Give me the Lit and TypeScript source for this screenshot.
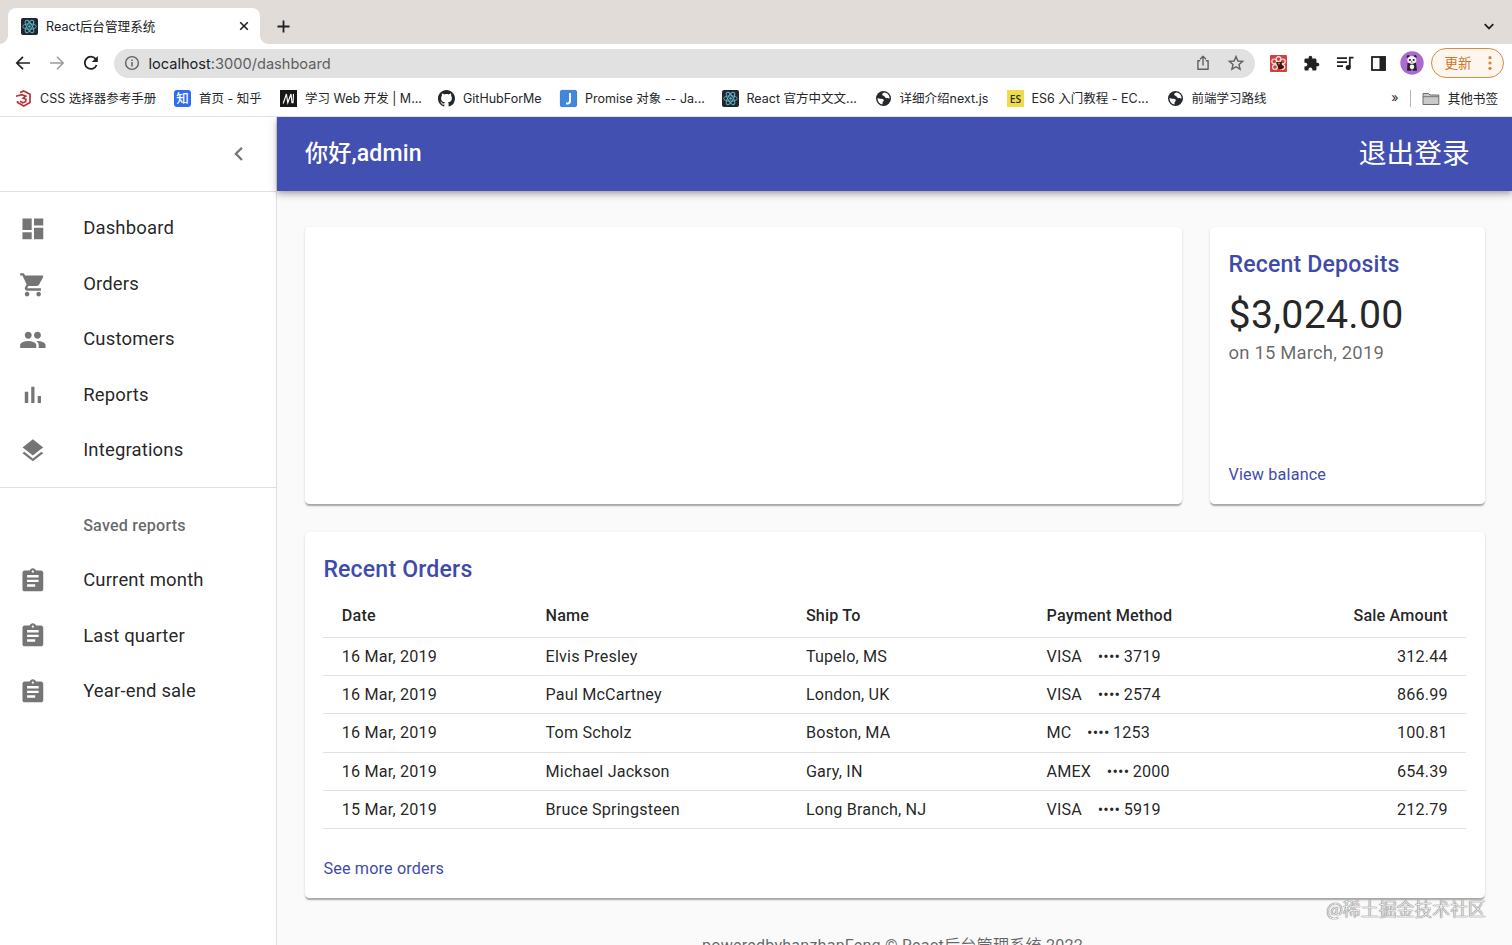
import { LitElement, html, css, svg } from "lit";
import { customElement, property } from "lit/decorators.js";
import { styleMap } from "lit/directives/style-map.js";

const reactMark = svg`<rect width="17" height="17" rx="2" fill="#20262e"/><g fill="none" stroke="#5fb4c9" stroke-width=".95"><ellipse cx="8.5" cy="8.5" rx="6.9" ry="2.7"/><ellipse cx="8.5" cy="8.5" rx="6.9" ry="2.7" transform="rotate(60 8.5 8.5)"/><ellipse cx="8.5" cy="8.5" rx="6.9" ry="2.7" transform="rotate(120 8.5 8.5)"/></g><circle cx="8.5" cy="8.5" r="1.3" fill="#5fb4c9"/>`;
const globe = svg`<circle cx="8.5" cy="8.5" r="7.5" fill="#25282c"/><path d="M2.5 8C4.5 9.2 5.8 8.4 7.6 9 9.2 9.600 9.200 11.200 7.700 11.800L7.400 14.500C4.200 13.800 2.400 11.200 2.500 8ZM9.600 2.500C8.400 3 6.800 3.400 7.200 4.800 7.800 6 9.400 5.700 9.900 7 10.400 8.600 12.700 8 14.600 8.600 14.800 5.600 12.600 3 9.600 2.500Z" fill="#fff"/>`;

const small: Record<string, unknown> = {
  react: reactMark,
  globe,
  css: svg`<path d="M5 2.6 8.7 1 15 4.3V12.6L8.7 16 2.6 12.6V11" fill="none" stroke="#b5343c" stroke-width="1.7"/><path d="M1 6.2 7 4.6 10.8 6.2 8.2 8.2 11 9.2 10.6 11.7 7.8 12.7 5 11.2" fill="none" stroke="#b5343c" stroke-width="1.7"/>`,
  zhihu: svg`<rect width="17" height="17" rx="3" fill="#2f6df0"/><text x="8.5" y="13" text-anchor="middle" font-family="Noto Sans CJK SC, sans-serif" font-weight="500" font-size="12.5" fill="#fff">知</text>`,
  mdn: svg`<rect width="17" height="17" fill="#15171a"/><path d="M3.2 13.5 6.4 4 7.8 12.800 11 4 12 13.300M13.500 4 13 13.300" fill="none" stroke="#fff" stroke-width="1.15"/>`,
  github: svg`<path transform="scale(1.06)" fill="#22262b" d="M8 0C3.58 0 0 3.58 0 8c0 3.54 2.29 6.53 5.47 7.59.4.07.55-.17.55-.38 0-.19-.01-.82-.01-1.49-2.01.37-2.53-.49-2.69-.94-.09-.23-.48-.94-.82-1.13-.28-.15-.68-.52-.01-.53.63-.01 1.08.58 1.23.82.72 1.21 1.87.87 2.33.66.07-.52.28-.87.51-1.07-1.78-.2-3.64-.89-3.64-3.95 0-.87.31-1.59.82-2.15-.08-.2-.36-1.02.08-2.12 0 0 .67-.21 2.2.82.64-.18 1.32-.27 2-.27s1.36.09 2 .27c1.53-1.04 2.2-.82 2.2-.82.44 1.1.16 1.92.08 2.12.51.56.82 1.27.82 2.15 0 3.07-1.87 3.75-3.65 3.95.29.25.54.73.54 1.48 0 1.07-.01 1.93-.01 2.2 0 .21.15.46.55.38A8.01 8.01 0 0 0 16 8c0-4.42-3.58-8-8-8Z"/>`,
  jia: svg`<rect x=".4" y=".4" width="16.2" height="16.2" rx="1.5" fill="#3f87e0" stroke="#2f6cbd" stroke-width=".8"/><path d="M10 3V10.8Q10 13.6 7.4 13.6H6" fill="none" stroke="#fff" stroke-width="2"/>`,
  es: svg`<rect width="17" height="17" fill="#efdb4f"/><text x="8.5" y="12.6" text-anchor="middle" font-family="Open Sans, sans-serif" font-weight="600" font-size="10.5" textLength="11.4" lengthAdjust="spacingAndGlyphs" fill="#33301c">ES</text>`,
};

const mui: Record<string, string> = {
  dashboard: "M3 13h8V3H3v10zm0 8h8v-6H3v6zm10 0h8V11h-8v10zm0-18v6h8V3h-8z",
  cart: "M7 18c-1.1 0-1.99.9-1.99 2S5.9 22 7 22s2-.9 2-2-.9-2-2-2zM1 2v2h2l3.6 7.59-1.35 2.45c-.16.28-.25.61-.25.96 0 1.1.9 2 2 2h12v-2H7.42c-.14 0-.25-.11-.25-.25l.03-.12.9-1.63h7.45c.75 0 1.41-.41 1.75-1.03l3.58-6.49c.08-.14.12-.31.12-.48 0-.55-.45-1-1-1H5.21l-.94-2H1zm16 16c-1.1 0-1.99.9-1.99 2s.89 2 1.99 2 2-.9 2-2-.9-2-2-2z",
  people: "M16 11c1.66 0 2.99-1.34 2.99-3S17.66 5 16 5c-1.66 0-3 1.34-3 3s1.34 3 3 3zm-8 0c1.66 0 2.99-1.34 2.99-3S9.66 5 8 5C6.34 5 5 6.34 5 8s1.34 3 3 3zm0 2c-2.33 0-7 1.17-7 3.5V19h14v-2.5c0-2.33-4.67-3.5-7-3.5zm8 0c-.29 0-.62.02-.97.05 1.16.84 1.97 1.97 1.97 3.45V19h6v-2.5c0-2.33-4.67-3.5-7-3.5z",
  bars: "M5 9.2h3V19H5zM10.6 5h2.8v14h-2.8zm5.6 8H19v6h-2.8z",
  layers: "M11.99 18.54l-7.37-5.73L3 14.07l9 7 9-7-1.63-1.27-7.38 5.74zM12 16l7.36-5.73L21 9l-9-7-9 7 1.63 1.27L12 16z",
  assignment: "M19 3h-4.18C14.4 1.84 13.3 1 12 1c-1.3 0-2.4.84-2.82 2H5c-1.1 0-2 .9-2 2v14c0 1.1.9 2 2 2h14c1.1 0 2-.9 2-2V5c0-1.1-.9-2-2-2zm-7 0c.55 0 1 .45 1 1s-.45 1-1 1-1-.45-1-1 .45-1 1-1zm2 14H7v-2h7v2zm3-4H7v-2h10v2zm0-4H7V7h10v2z",
  chevron: "M15.41 7.41L14 6l-6 6 6 6 1.41-1.41L10.83 12z",
};

@customElement("app-bookmark")
class AppBookmark extends LitElement {
  @property() icon = "";
  @property({ type: Number }) text = 100;
  static styles = css`
    :host { display: flex; align-items: center; height: 18px; flex: none; }
    svg { width: 17px; height: 17px; display: block; flex: none; overflow: visible; }
    .label { margin-left: 8px; font: 12.5px/18px Inter, "Noto Sans CJK SC", sans-serif; color: #25272a; height: 18px; white-space: nowrap; display: block; flex: none; }
  `;
  render() {
    return html`<svg viewBox="0 0 17 17">${small[this.icon]}</svg>
      <span class="label" style=${styleMap({ width: `${this.text}px` })}><slot></slot></span>`;
  }
}

@customElement("browser-bar")
class BrowserBar extends LitElement {
  static styles = css`
    :host { display: block; height: 116.500px; background: #fff; font-family: Inter, "Noto Sans CJK SC", sans-serif; color: #202124; box-sizing: border-box; border-bottom: 1px solid #dfe0e1; }
    svg { display: block; flex: none; }
    .tabs { height: 44px; background: #e1dcd8; display: flex; align-items: flex-end; }
    .foot { width: 8px; height: 8px; flex: none; background: radial-gradient(circle at 0 0, transparent 7.5px, #fff 8px); }
    .foot.right { background: radial-gradient(circle at 100% 0, transparent 7.5px, #fff 8px); }
    .tab { width: 252px; height: 36px; box-sizing: border-box; background: #fff; border-radius: 8px 8px 0 0; display: flex; align-items: center; padding: 0 11.500px 0 13px; }
    .title { flex: 1; margin-left: 8px; font-size: 12.600px; line-height: 18px; white-space: nowrap; padding-top: 1px; }
    .plus { margin: 0 0 11px 9px; }
    .down { margin: 0 17px 11px auto; }
    .tools { height: 38px; display: flex; align-items: center; padding-left: 14px; }
    .nav { margin-right: 16px; }
    .url { width: 1141px; height: 29px; box-sizing: border-box; border-radius: 15px; background: #e1e1e1; display: flex; align-items: center; padding: 0 10px 0 10.500px; margin-left: -2.500px; }
    .addr { flex: 1; margin-left: 8.500px; font-size: 14.600px; line-height: 20px; color: #5d5f62; padding-top: 1px; }
    .addr b { font-weight: 400; color: #202124; }
    .star { margin-left: 16px; }
    .ext { display: flex; align-items: center; margin-left: 15.500px; gap: 16px; }
    .avatar { margin-left: -3px; }
    .update { margin-left: 7px; width: 73px; height: 30px; box-sizing: border-box; border: 1.5px solid #dc8a42; border-radius: 15px; background: #fdf6ee; color: #d07325; display: flex; align-items: center; padding: 0 11px 0 12.500px; justify-content: space-between; font-size: 13.5px; line-height: 18px; }
    .marks { height: 33px; display: flex; align-items: center; padding: 0 14px 0 15px; }
    .list { display: flex; flex: 1; gap: 17px; }
    .more { font-size: 12.500px; line-height: 18px; margin: 0 11px 1px 0; }
    .sep { width: 1px; height: 17px; background: #b3b3b3; margin-right: 11px; }
    .other { font-size: 12.600px; line-height: 18px; margin-left: 8px; }
  `;
  render() {
    return html`
      <div class="tabs">
        <div class="foot"></div>
        <div class="tab">
          <svg width="17" height="17" viewBox="0 0 17 17">${reactMark}</svg>
          <span class="title">React后台管理系统</span>
          <svg width="10" height="10" viewBox="0 0 10 10"><path d="M1.2 1.2 8.8 8.8M8.8 1.2 1.2 8.8" stroke="#202124" stroke-width="1.6"/></svg>
        </div>
        <div class="foot right"></div>
        <svg class="plus" width="13" height="13" viewBox="0 0 13 13"><path d="M6.5 .5V12.5M.5 6.5H12.5" stroke="#202124" stroke-width="1.8"/></svg>
        <svg class="down" width="12" height="13" viewBox="0 0 12 13"><path d="M1.7 4.2 6 8.5 10.3 4.2" fill="none" stroke="#202124" stroke-width="1.8"/></svg>
      </div>
      <div class="tools">
        <svg class="nav" width="18" height="18" viewBox="0 0 18 18"><path d="M16 9H3M9 2.8 2.8 9 9 15.2" fill="none" stroke="#202124" stroke-width="1.7"/></svg>
        <svg class="nav" width="18" height="18" viewBox="0 0 18 18"><path d="M2 9H15M9 2.8 15.2 9 9 15.2" fill="none" stroke="#9a9c9e" stroke-width="1.5"/></svg>
        <svg class="nav" width="18" height="18" viewBox="0 0 18 18"><path d="M14.6 11A6.1 6.1 0 1 1 13.6 4.9L15 6.4" fill="none" stroke="#202124" stroke-width="1.8"/><path d="M15.8 2V8H9.8Z" fill="#202124"/></svg>
        <div class="url">
          <svg width="16" height="16" viewBox="0 0 16 16"><circle cx="8" cy="8" r="6.4" fill="none" stroke="#5f6163" stroke-width="1.4"/><path d="M8 7V11.6M8 4.4V5.9" stroke="#5f6163" stroke-width="1.5"/></svg>
          <span class="addr"><b>localhost</b>:3000/dashboard</span>
          <svg width="16" height="18" viewBox="0 0 16 18"><path d="M5.2 6.8H2.9V15.2H13.1V6.8H10.8M8 11.5V2.4M5 5.2 8 2.2 11 5.2" fill="none" stroke="#5f6163" stroke-width="1.4" stroke-linejoin="round"/></svg>
          <svg class="star" width="18" height="18" viewBox="0 0 18 18"><path d="M9 2.5 10.9 7 15.7 7.4 12 10.5 13.1 15.2 9 12.7 4.9 15.2 6 10.5 2.3 7.4 7.1 7Z" fill="none" stroke="#5f6163" stroke-width="1.4"/></svg>
        </div>
        <div class="ext">
          <svg width="17" height="17" viewBox="0 0 17 17"><rect width="17" height="17" rx="1" fill="#cf4240"/><g fill="none" stroke="#fae4df" stroke-width="1.2"><circle cx="8.5" cy="4.1" r="2.4"/><circle cx="4.2" cy="6.4" r="2.4"/><circle cx="12.8" cy="6.4" r="2.4"/><circle cx="5" cy="12" r="2.4"/><circle cx="12.4" cy="12" r="2.4"/></g><path d="M6 7 9 7.3 12 6.5 11.8 9.5 14 12 11.6 14.2 8.5 14 7.5 10.5Z" fill="#3c1615"/><circle cx="9" cy="8.6" r=".9" fill="#d99c39"/></svg>
          <svg width="17" height="17" viewBox="0 0 24 24"><path fill="#202124" d="M20.5 11H19V7c0-1.1-.9-2-2-2h-4V3.5C13 2.12 11.88 1 10.5 1S8 2.12 8 3.5V5H4c-1.1 0-1.99.9-1.99 2v3.8H3.5c1.49 0 2.7 1.21 2.7 2.7s-1.21 2.7-2.7 2.7H2V20c0 1.1.9 2 2 2h3.800v-1.500c0-1.490 1.210-2.700 2.700-2.700 1.490 0 2.700 1.210 2.700 2.700V22H17c1.100 0 2-.9 2-2v-4h1.500c1.380 0 2.500-1.120 2.500-2.500S21.880 11 20.500 11z"/></svg>
          <svg width="18" height="17" viewBox="0 0 18 17"><path d="M1 3.1H11M1 7.1H11M1 11.1H7M13.8 12V2.7H17.5" fill="none" stroke="#202124" stroke-width="1.8"/><circle cx="12.2" cy="12.4" r="2.5" fill="#202124"/></svg>
          <svg width="17" height="17" viewBox="0 0 17 17"><rect x="2" y="2" width="13" height="13" fill="none" stroke="#202124" stroke-width="1.8"/><rect x="9.5" y="1.5" width="6" height="14" fill="#202124"/></svg>
          <svg class="avatar" width="24" height="24" viewBox="0 0 24 24"><circle cx="12" cy="12" r="11.7" fill="#aa6bd0"/><g fill="#28222f"><circle cx="8.3" cy="5.8" r="1.7"/><circle cx="15" cy="5.8" r="1.7"/><path d="M7.5 12h8.5l1 7.8h-4l-1-2-1 2H7Z"/></g><ellipse cx="11.8" cy="9" rx="4.6" ry="3.9" fill="#f4f0f3"/><ellipse cx="12" cy="15.8" rx="2.3" ry="2.4" fill="#f4f0f3"/><g fill="#28222f"><circle cx="9.9" cy="9" r="1.1"/><circle cx="13.7" cy="9" r="1.1"/><circle cx="11.8" cy="10.9" r=".6"/></g></svg>
        </div>
        <div class="update"><span>更新</span><svg width="4" height="16" viewBox="0 0 4 16"><g fill="#d98137"><circle cx="2" cy="2.7" r="1.6"/><circle cx="2" cy="8" r="1.6"/><circle cx="2" cy="13.3" r="1.6"/></g></svg></div>
      </div>
      <div class="marks">
        <div class="list">
          <app-bookmark icon="css" text="117">CSS 选择器参考手册</app-bookmark>
          <app-bookmark icon="zhihu" text="64">首页 - 知乎</app-bookmark>
          <app-bookmark icon="mdn" text="116">学习 Web 开发 | M...</app-bookmark>
          <app-bookmark icon="github" text="80">GitHubForMe</app-bookmark>
          <app-bookmark icon="jia" text="119.5">Promise 对象 -- Ja...</app-bookmark>
          <app-bookmark icon="react" text="111">React 官方中文文...</app-bookmark>
          <app-bookmark icon="globe" text="90">详细介绍next.js</app-bookmark>
          <app-bookmark icon="es" text="118">ES6 入门教程 - EC...</app-bookmark>
          <app-bookmark icon="globe" text="76">前端学习路线</app-bookmark>
        </div>
        <span class="more">»</span>
        <div class="sep"></div>
        <svg width="18" height="14" viewBox="0 0 18 14"><path d="M1 12.5V1.5H6.5L8 3H16.8V12.5Z" fill="#c9c9c9" stroke="#6d6d6d" stroke-width="1"/><path d="M1 4.7H16.8" stroke="#6d6d6d" stroke-width=".9"/></svg>
        <span class="other">其他书签</span>
      </div>`;
  }
}

const orders = [
  ["16 Mar, 2019", "Elvis Presley", "Tupelo, MS", "VISA ⠀•••• 3719", "312.44"],
  ["16 Mar, 2019", "Paul McCartney", "London, UK", "VISA ⠀•••• 2574", "866.99"],
  ["16 Mar, 2019", "Tom Scholz", "Boston, MA", "MC ⠀•••• 1253", "100.81"],
  ["16 Mar, 2019", "Michael Jackson", "Gary, IN", "AMEX ⠀•••• 2000", "654.39"],
  ["15 Mar, 2019", "Bruce Springsteen", "Long Branch, NJ", "VISA ⠀•••• 5919", "212.79"],
];

@customElement("app-root")
class AppRoot extends LitElement {
  static styles = css`
    :host { display: block; height: 945px; overflow: hidden; position: relative; }
    * { box-sizing: border-box; }
    .page { zoom: 1.155; height: 718px; display: flex; background: #fafafa; overflow: hidden; font-family: Roboto, "Noto Sans CJK SC", sans-serif; color: rgba(0,0,0,.87); }
    .drawer { width: 240px; flex: none; background: #fff; border-right: 1px solid rgba(0,0,0,.12); }
    .head { height: 64.5px; display: flex; align-items: center; justify-content: flex-end; padding-right: 20.5px; }
    svg { width: 24px; height: 24px; fill: rgba(0,0,0,.54); display: block; flex: none; }
    .group { border-top: 1px solid rgba(0,0,0,.12); padding: 8px 0; }
    .group + .group { margin-top: -.3px; }
    .item { height: 48px; display: flex; align-items: center; padding-left: 16.4px; gap: 31.6px; font-size: 16px; line-height: 24px; letter-spacing: .00938em; }
    .item span { padding-top: .6px; }
    .sub { height: 48px; line-height: 49px; padding-left: 72px; font-size: 14px; font-weight: 500; letter-spacing: .01071em; color: rgba(0,0,0,.6); }
    .main { flex: 1; min-width: 0; display: flex; flex-direction: column; }
    .bar { height: 64.2px; flex: none; background: #4250b1; color: #fff; display: flex; align-items: center; justify-content: space-between; padding: 0 36.6px 0 24px; box-shadow: 0 2px 4px -1px rgba(0,0,0,.2), 0 4px 5px rgba(0,0,0,.14), 0 1px 10px rgba(0,0,0,.12); position: relative; }
    .hello { font-size: 20px; font-weight: 500; line-height: 32px; letter-spacing: .0075em; padding-top: 2.400px; }
    .logout { font-size: 24px; line-height: 24px; padding-top: 1px; }
    .content { padding: 31.6px 23.6px 0 24px; display: grid; grid-template-columns: 1fr 237.8px; gap: 24px; }
    .card { background: #fff; border-radius: 4px; padding: 16px; display: flex; flex-direction: column; box-shadow: 0 2px 1px -1px rgba(0,0,0,.16), 0 1px 1px rgba(0,0,0,.12), 0 1px 3px rgba(0,0,0,.1); }
    .chart, .deposit { height: 240px; }
    .orders { grid-column: 1 / 3; }
    .h6 { font-size: 20px; font-weight: 500; line-height: 32px; letter-spacing: .0075em; color: #3f4bab; padding-top: 1.300px; margin-bottom: 5.700px; }
    .sum { font-size: 34px; line-height: 42px; letter-spacing: .00735em; padding-top: .5px; }
    .date { flex: 1; font-size: 16px; line-height: 24px; letter-spacing: .00938em; color: rgba(0,0,0,.6); }
    .link { font-size: 14px; line-height: 20px; letter-spacing: .01071em; color: #3f4bab; }
    .more { margin-top: 24px; padding-top: .6px; margin-bottom: -.6px; }
    table { width: 100%; table-layout: fixed; border-collapse: separate; border-spacing: 0; }
    th, td { text-align: left; font-size: 14px; line-height: 20px; letter-spacing: .01071em; padding: 6px 16px; border-bottom: 1px solid #e0e0e0; font-weight: 400; white-space: pre; }
    td { padding: 6.100px 16px; }
    td.c3 { word-spacing: -.6px; }
    th { font-weight: 500; line-height: 24px; }
    .c0 { width: 176.4px; } .c1 { width: 225.4px; } .c2 { width: 208.3px; }
    .c4 { text-align: right; width: 150px; }
    .foot { text-align: center; font-size: 14px; line-height: 20px; letter-spacing: .01071em; color: rgba(0,0,0,.6); margin-top: 31.4px; padding-right: 3.5px; white-space: nowrap; }
    .mark { position: absolute; right: 26px; top: 896px; font: 300 17.9px/24px "Noto Sans CJK SC", sans-serif; color: #f6f6f6; text-shadow: 0 0 1px #666, 0 0 1px #777, 0 0 1px #888; }
  `;
  item(icon: string, label: string) {
    return html`<div class="item"><svg viewBox="0 0 24 24"><path d=${mui[icon]}></path></svg><span>${label}</span></div>`;
  }
  render() {
    return html`
      <browser-bar></browser-bar>
      <div class="page">
        <div class="drawer">
          <div class="head"><svg viewBox="0 0 24 24"><path d=${mui.chevron}></path></svg></div>
          <div class="group">
            ${this.item("dashboard", "Dashboard")}${this.item("cart", "Orders")}${this.item("people", "Customers")}${this.item("bars", "Reports")}${this.item("layers", "Integrations")}
          </div>
          <div class="group">
            <div class="sub">Saved reports</div>
            ${this.item("assignment", "Current month")}${this.item("assignment", "Last quarter")}${this.item("assignment", "Year-end sale")}
          </div>
        </div>
        <div class="main">
          <div class="bar"><span class="hello">你好,admin</span><span class="logout">退出登录</span></div>
          <div class="content">
            <div class="card chart"></div>
            <div class="card deposit">
              <div class="h6">Recent Deposits</div>
              <div class="sum">$3,024.00</div>
              <div class="date">on 15 March, 2019</div>
              <div class="link">View balance</div>
            </div>
            <div class="card orders">
              <div class="h6">Recent Orders</div>
              <table>
                <thead><tr>${["Date", "Name", "Ship To", "Payment Method", "Sale Amount"].map((t, i) => html`<th class="c${i}">${t}</th>`)}</tr></thead>
                <tbody>${orders.map((r) => html`<tr>${r.map((t, i) => html`<td class="c${i}">${t}</td>`)}</tr>`)}</tbody>
              </table>
              <div class="link more">See more orders</div>
            </div>
          </div>
          <div class="foot">poweredbyhanzhanFeng © React后台管理系统 2022</div>
        </div>
      </div>
      <div class="mark">@稀土掘金技术社区</div>`;
  }
}
